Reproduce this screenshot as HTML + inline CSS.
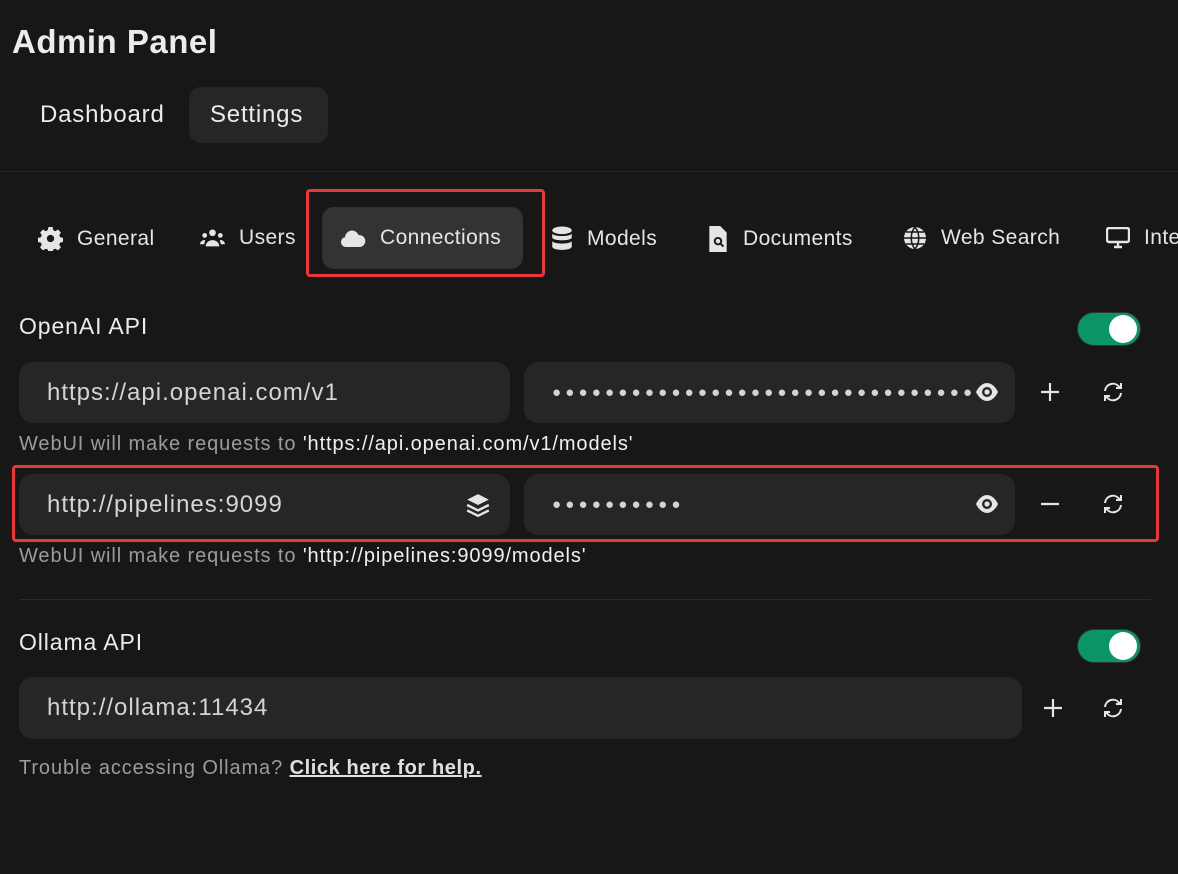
<!DOCTYPE html>
<html><head><meta charset="utf-8"><style>
*{box-sizing:border-box;margin:0;padding:0}
body{width:1178px;height:874px;background:#171717;font-family:"Liberation Sans",sans-serif;color:#ececec;position:relative;overflow:hidden}
.a{position:absolute}
.inp{position:absolute;background:#262626;border-radius:14px;font-size:24px;color:#d4d4d4;padding-left:28px;display:flex;align-items:center;letter-spacing:1px}
.help{position:absolute;font-size:20px;color:#9b9b9b;letter-spacing:0.9px}
.help b{color:#f0f0f0;font-weight:normal}
.tog{position:absolute;width:64px;height:34px;background:#0b9466;border-radius:17px;border:1px solid #333}
.tog:after{content:"";position:absolute;right:3px;top:2px;width:28px;height:28px;border-radius:50%;background:#fff}
.tab{position:absolute;top:226px;font-size:21px;color:#e5e5e5;display:flex;align-items:center;gap:14px;letter-spacing:0.4px}
.red{position:absolute;border:3px solid #e5383b;border-radius:4px}
svg{display:block}
</style></head><body>
<div class="a" style="left:12px;top:23px;font-size:33px;font-weight:bold;letter-spacing:0.5px">Admin Panel</div>
<div class="a" style="left:189px;top:87px;width:139px;height:56px;background:#262626;border-radius:12px"></div>
<div class="a" style="left:40px;top:101px;font-size:24px;letter-spacing:0.8px">Dashboard</div>
<div class="a" style="left:210px;top:101px;font-size:24px;letter-spacing:0.8px">Settings</div>
<div class="a" style="left:0;top:171px;width:1178px;height:1px;background:#262626"></div>

<div class="a" style="left:322px;top:207px;width:201px;height:62px;background:#333;border-radius:12px"></div>
<div class="red" style="left:306px;top:189px;width:239px;height:88px"></div>
<div class="tab" style="left:38px"><svg width="25" height="25" viewBox="0 0 24 24"><path fill="#e5e5e5" d="M10 1h4l.6 3 2 1 2.6-1.6 2.8 2.8L20.4 8.8l.8 2 2.8.6v4l-2.8.6-.8 2 1.6 2.6-2.8 2.8-2.6-1.6-2 .8-.6 2.8h-4l-.6-2.8-2-.8-2.6 1.6-2.8-2.8 1.6-2.6-.8-2L0 15.4v-4l2.8-.6.8-2L2 6.2l2.8-2.8L7.4 5l2-1zM12 8.5a3.5 3.5 0 1 0 0 7 3.5 3.5 0 0 0 0-7z"/></svg>General</div>
<div class="tab" style="left:200px"><svg width="25" height="22" viewBox="0 0 24 20"><circle cx="12" cy="5" r="3.2" fill="#e5e5e5"/><circle cx="4.5" cy="7.5" r="2.3" fill="#e5e5e5"/><circle cx="19.5" cy="7.5" r="2.3" fill="#e5e5e5"/><path fill="#e5e5e5" d="M5.5 18a6.5 6 0 0 1 13 0zM0 16a4.5 4 0 0 1 5-4l-1 4zM24 16a4.5 4 0 0 0-5-4l1 4z"/></svg>Users</div>
<div class="tab" style="left:340px"><svg width="26" height="20" viewBox="0 0 26 20"><path fill="#e5e5e5" d="M6 19a5 5 0 0 1-1-9.9A7 7 0 0 1 18.5 7 6 6 0 0 1 20 19z"/></svg>Connections</div>
<div class="tab" style="left:551px"><svg width="22" height="26" viewBox="0 0 20 24"><ellipse cx="10" cy="4" rx="9" ry="3.5" fill="#e5e5e5"/><path fill="#e5e5e5" d="M1 7c2 3 16 3 18 0v4c-2 3-16 3-18 0zM1 14c2 3 16 3 18 0v5c0 4-18 4-18 0z"/></svg>Models</div>
<div class="tab" style="left:707px"><svg width="22" height="26" viewBox="0 0 20 24"><path fill="#e5e5e5" d="M2 0h10l6 6v18H2z"/><circle cx="10" cy="14" r="3" fill="none" stroke="#171717" stroke-width="1.8"/><path d="M12 16l3 3" stroke="#171717" stroke-width="1.8"/></svg>Documents</div>
<div class="tab" style="left:903px"><svg width="24" height="24" viewBox="0 0 24 24"><circle cx="12" cy="12" r="11" fill="#e5e5e5"/><path d="M1 12h22M12 1c-5 6-5 16 0 22M12 1c5 6 5 16 0 22M3 6h18M3 18h18" stroke="#171717" stroke-width="1.5" fill="none"/></svg>Web Search</div>
<div class="tab" style="left:1106px"><svg width="24" height="22" viewBox="0 0 24 22"><rect x="1" y="1" width="22" height="14" rx="2" fill="none" stroke="#e5e5e5" stroke-width="2.4"/><path d="M8 20h8M12 15v5" stroke="#e5e5e5" stroke-width="2.4"/></svg>Interface</div>

<div class="a" style="left:19px;top:313px;font-size:23px;letter-spacing:0.9px">OpenAI API</div>
<div class="tog" style="left:1077px;top:312px"></div>
<div class="inp" style="left:19px;top:362px;width:491px;height:61px">https://api.openai.com/v1</div>
<div class="inp" style="left:524px;top:362px;width:491px;height:61px;overflow:hidden"><span style="width:436px;overflow:hidden;white-space:nowrap;font-size:15px;letter-spacing:4.2px">●●●●●●●●●●●●●●●●●●●●●●●●●●●●●●●●●</span></div>
<div class="help" style="left:19px;top:433px">WebUI will make requests to <b>'https://api.openai.com/v1/models'</b></div>

<div class="inp" style="left:19px;top:474px;width:491px;height:61px">http://pipelines:9099</div>
<svg class="a" style="left:465px;top:492px" width="26" height="26" viewBox="0 0 24 24"><path fill="#e5e5e5" d="M12 2l10 5-10 5L2 7z"/><path d="M2 12l10 5 10-5M2 17l10 5 10-5" stroke="#e5e5e5" stroke-width="2.2" fill="none"/></svg>
<div class="inp" style="left:524px;top:474px;width:491px;height:61px;font-size:15px;letter-spacing:4.2px">●●●●●●●●●●</div>
<div class="red" style="left:12px;top:465px;width:1147px;height:77px"></div>
<div class="help" style="left:19px;top:545px">WebUI will make requests to <b>'http://pipelines:9099/models'</b></div>

<svg class="a" style="left:974px;top:381px" width="26" height="22" viewBox="0 0 26 22"><path fill="#e5e5e5" d="M13 2C6 2 2 11 2 11s4 9 11 9 11-9 11-9-4-9-11-9z"/><circle cx="13" cy="11" r="5" fill="#262626"/><circle cx="13" cy="11" r="2.6" fill="#e5e5e5"/></svg>
<svg class="a" style="left:974px;top:493px" width="26" height="22" viewBox="0 0 26 22"><path fill="#e5e5e5" d="M13 2C6 2 2 11 2 11s4 9 11 9 11-9 11-9-4-9-11-9z"/><circle cx="13" cy="11" r="5" fill="#262626"/><circle cx="13" cy="11" r="2.6" fill="#e5e5e5"/></svg>

<svg class="a" style="left:1039px;top:381px" width="22" height="22"><path d="M11 2v18M2 11h18" stroke="#e5e5e5" stroke-width="2.2"/></svg>
<svg class="a" style="left:1039px;top:493px" width="22" height="22"><path d="M2 11h18" stroke="#e5e5e5" stroke-width="2.2"/></svg>
<svg class="a" style="left:1042px;top:697px" width="22" height="22"><path d="M11 2v18M2 11h18" stroke="#e5e5e5" stroke-width="2.2"/></svg>

<svg class="a" style="left:1101px;top:380px" width="24" height="24" viewBox="0 0 24 24"><path d="M4 11a8 8 0 0 1 14-4.5L20 8M20 3v5h-5M20 13a8 8 0 0 1-14 4.5L4 16M4 21v-5h5" stroke="#e5e5e5" stroke-width="2" fill="none"/></svg>
<svg class="a" style="left:1101px;top:492px" width="24" height="24" viewBox="0 0 24 24"><path d="M4 11a8 8 0 0 1 14-4.5L20 8M20 3v5h-5M20 13a8 8 0 0 1-14 4.5L4 16M4 21v-5h5" stroke="#e5e5e5" stroke-width="2" fill="none"/></svg>
<svg class="a" style="left:1101px;top:696px" width="24" height="24" viewBox="0 0 24 24"><path d="M4 11a8 8 0 0 1 14-4.5L20 8M20 3v5h-5M20 13a8 8 0 0 1-14 4.5L4 16M4 21v-5h5" stroke="#e5e5e5" stroke-width="2" fill="none"/></svg>

<div class="a" style="left:19px;top:599px;width:1132px;height:1px;background:#2a2a2a"></div>
<div class="a" style="left:19px;top:629px;font-size:23px;letter-spacing:0.9px">Ollama API</div>
<div class="tog" style="left:1077px;top:629px"></div>
<div class="inp" style="left:19px;top:677px;width:1003px;height:62px">http://ollama:11434</div>
<div class="help" style="left:19px;top:757px">Trouble accessing Ollama? <b style="text-decoration:underline;font-weight:bold;color:#e0e0e0;letter-spacing:0.6px">Click here for help.</b></div>
</body></html>
